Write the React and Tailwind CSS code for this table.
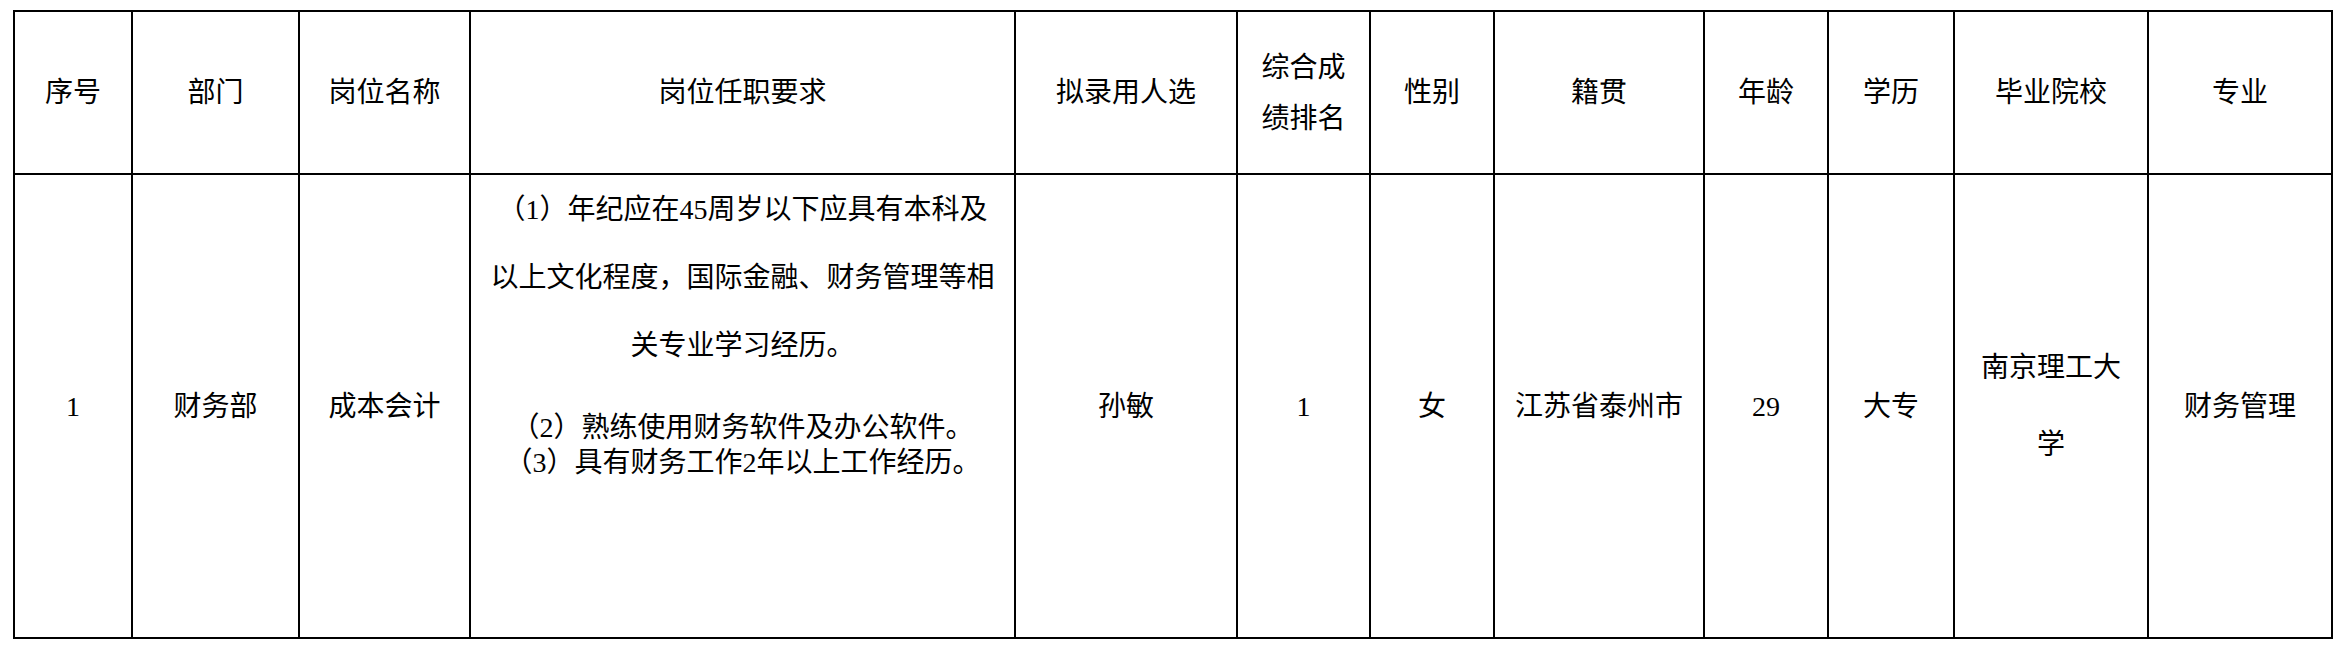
import React from 'react';

const font = "font-['Liberation_Serif','Noto_Sans_CJK_SC',serif]";

const headers = [
  '序号',
  '部门',
  '岗位名称',
  '岗位任职要求',
  '拟录用人选',
  null,
  '性别',
  '籍贯',
  '年龄',
  '学历',
  '毕业院校',
  '专业',
];

function Cell({ children, className = '' }) {
  return (
    <div className={`bg-white flex items-center justify-center text-center whitespace-nowrap ${className}`}>
      {children}
    </div>
  );
}

export default function App() {
  return (
    <div className={`w-[2342px] h-[653px] bg-white text-black text-[28px] leading-[35px] ${font}`}>
      <div className="ml-[13px] pt-[10px]">
        <div className="grid w-fit bg-black p-[2px] gap-[2px] grid-cols-[116px_165px_169px_543px_220px_131px_122px_208px_122px_124px_192px_182px] grid-rows-[161px_462px]">
          {/* header row */}
          {headers.map((h, i) =>
            h === null ? (
              <Cell key={i} className="leading-[51px]">
                <div>
                  综合成
                  <br />
                  绩排名
                </div>
              </Cell>
            ) : (
              <Cell key={i}>{h}</Cell>
            )
          )}

          {/* body row */}
          <Cell>1</Cell>
          <Cell>财务部</Cell>
          <Cell>成本会计</Cell>
          <div className="bg-white flex flex-col items-center text-center whitespace-nowrap pt-[1px]">
            <div className="leading-[68px]">
              （1）年纪应在45周岁以下应具有本科及
              <br />
              以上文化程度，国际金融、财务管理等相
              <br />
              关专业学习经历。
            </div>
            <div className="mt-[30px]">
              （2）熟练使用财务软件及办公软件。
              <br />
              （3）具有财务工作2年以上工作经历。
            </div>
          </div>
          <Cell>孙敏</Cell>
          <Cell>1</Cell>
          <Cell>女</Cell>
          <Cell>江苏省泰州市</Cell>
          <Cell>29</Cell>
          <Cell>大专</Cell>
          <Cell className="leading-[77px]">
            <div>
              南京理工大
              <br />
              学
            </div>
          </Cell>
          <Cell>财务管理</Cell>
        </div>
      </div>
    </div>
  );
}
